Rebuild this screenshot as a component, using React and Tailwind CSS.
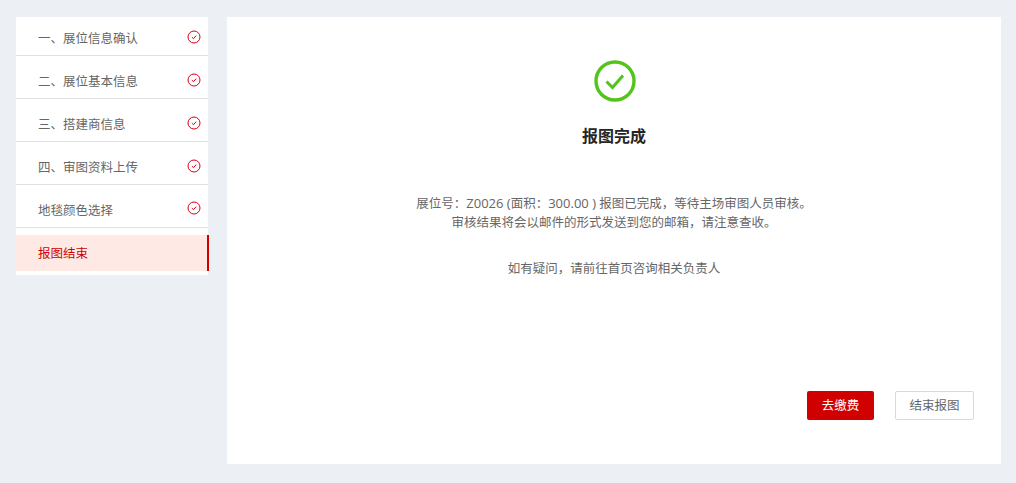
const font = { fontFamily: '"Open Sans", "Noto Sans CJK SC", "Liberation Sans", sans-serif' };

function SmallCheck() {
  return (
    <svg width="14" height="14" viewBox="0 0 14 14" fill="none" className="block shrink-0">
      <circle cx="7" cy="7" r="6" stroke="#d9001b" strokeWidth="1" />
      <path d="M4.9 7.1 L6.5 8.7 L9.2 5.6" stroke="#d9001b" strokeWidth="1" />
    </svg>
  );
}

const items = [
  { t: "一、展位信息确认", row: "h-[39px]", text: "mt-[7px]", icon: "mt-[2px]" },
  { t: "二、展位基本信息", row: "h-[43px]", text: "mt-[10px]", icon: "mt-[6px]" },
  { t: "三、搭建商信息", row: "h-[43px]", text: "mt-[10px]", icon: "mt-[6px]" },
  { t: "四、审图资料上传", row: "h-[43px]", text: "mt-[10px]", icon: "mt-[6px]" },
  { t: "地毯颜色选择", row: "h-[43px]", text: "mt-[10px]", icon: "mt-[4px]" },
];

export default function App() {
  return (
    <div className="flex h-[483px] w-[1016px] items-start overflow-hidden bg-[#eceff4] pl-4 pt-[17px]" style={font}>
      <aside className="h-[258px] w-[192px] shrink-0 bg-white">
        {items.map((it) => (
          <div
            key={it.t}
            className={`flex items-center justify-between border-b border-[#e0e0e2] pl-[22px] pr-[7px] text-[12.5px] text-[#666666] ${it.row}`}
          >
            <span className={it.text}>{it.t}</span>
            <span className={it.icon}><SmallCheck /></span>
          </div>
        ))}
        <div className="relative mt-[7px] flex h-[36px] items-center bg-[#ffe9e5] pl-[22px] pt-[2px] text-[12.5px] text-[#d00000]">
          报图结束
          <span className="absolute -right-px top-0 h-full w-[2px] bg-[#d00000]" />
        </div>
      </aside>
      <main className="ml-[19px] flex h-[447px] w-[774px] shrink-0 flex-col items-center bg-white">
        <svg width="42" height="42" viewBox="0 0 42 42" fill="none" className="ml-[2px] mt-[43px] block">
          <circle cx="21" cy="21" r="19" stroke="#52c41a" strokeWidth="3.4" />
          <path d="M12.5 21.5 L18.5 27.5 L29 15.5" stroke="#52c41a" strokeWidth="3" />
        </svg>
        <h1 className="mt-[22px] text-[16px] font-bold leading-[24px] text-[#262626]">报图完成</h1>
        <div className="mt-[46px] text-center text-[12.5px] leading-[19px] text-[#666666]">
          <p>展位号：<span className="text-[13px]">Z0026 (</span>面积：<span className="text-[13px]">300.00 )</span> 报图已完成，等待主场审图人员审核。</p>
          <p>审核结果将会以邮件的形式发送到您的邮箱，请注意查收。</p>
          <p className="mt-[27px]">如有疑问，请前往首页咨询相关负责人</p>
        </div>
        <div className="mt-auto mb-[44px] flex gap-[21px] self-end pr-[27px]">
          <button className="h-[29px] w-[67px] rounded-[2px] bg-[#d00000] pt-px text-[12.5px] text-white">去缴费</button>
          <button className="h-[29px] w-[79px] rounded-[2px] border border-[#d9d9d9] bg-white pt-px text-[12.5px] text-[#666666]">结束报图</button>
        </div>
      </main>
    </div>
  );
}
